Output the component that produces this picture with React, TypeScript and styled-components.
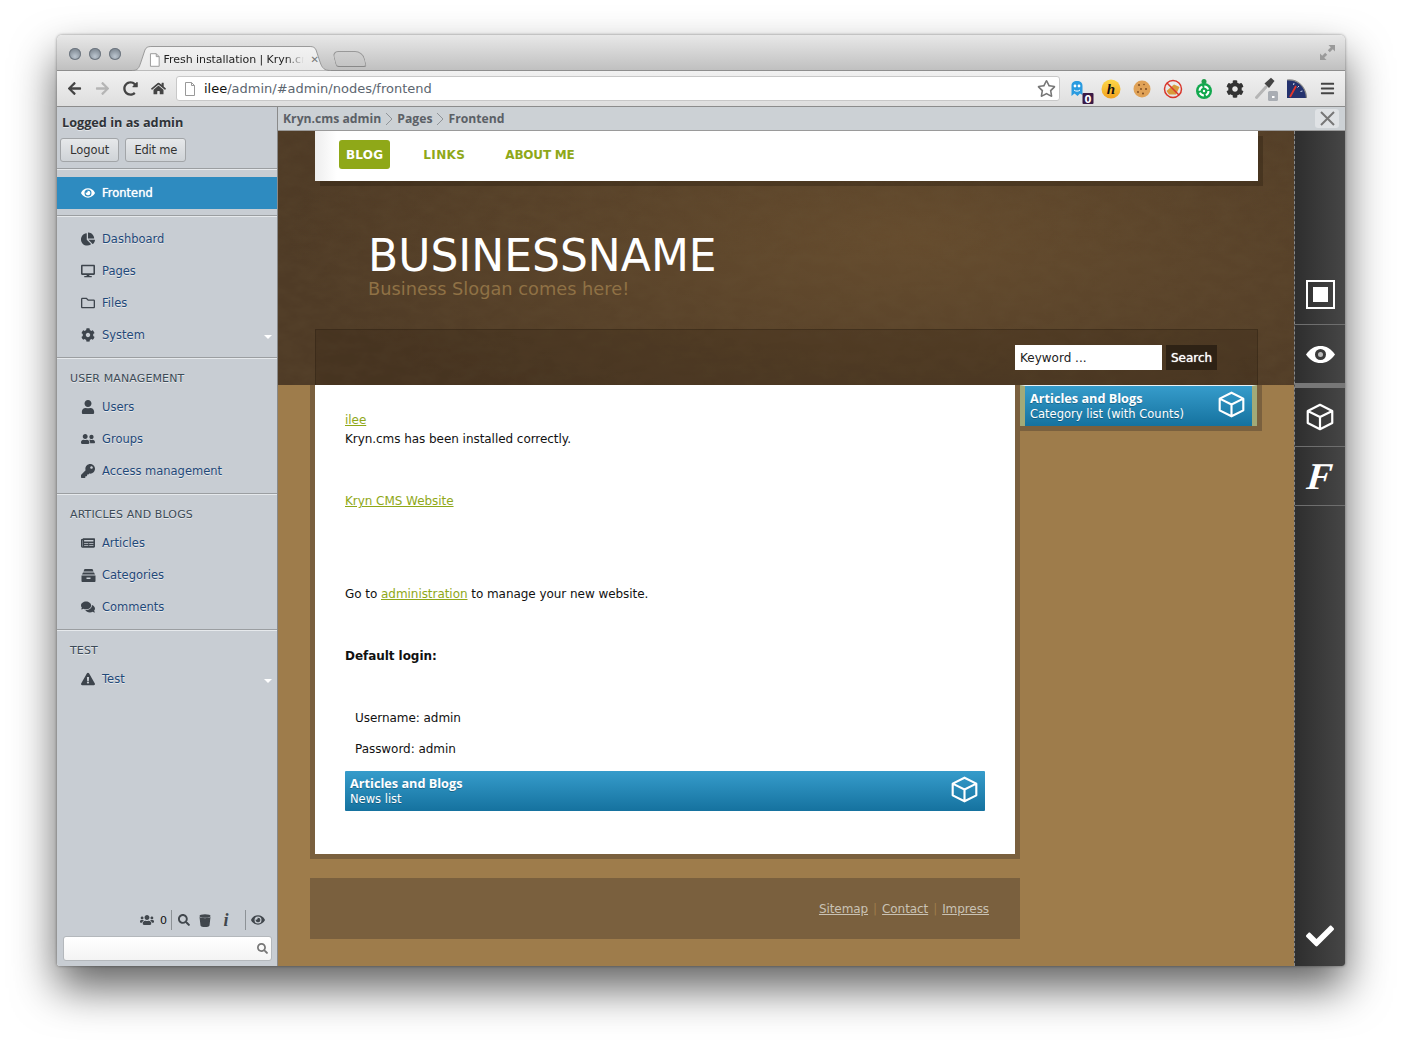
import React from "react";
import styled, { createGlobalStyle } from "styled-components";
import {
    FaChartPie, FaDesktop, FaRegFolder, FaCog, FaUser, FaUserFriends, FaKey,
    FaNewspaper, FaComments, FaExclamationTriangle, FaEye, FaSearch,
    FaUsers, FaCheck, FaArrowLeft, FaArrowRight, FaRedoAlt, FaHome,
    FaRegStar, FaBars,
} from "react-icons/fa";

const GlobalStyle = createGlobalStyle`
    html, body { margin: 0; padding: 0; background: #fff; }
    body { font-family: "DejaVu Sans", Verdana, sans-serif; font-size: 12px; }
    * { box-sizing: border-box; }
`;

const Cube = ({ size = 26 }: { size?: number }) => (
    <svg width={size} height={size} viewBox="0 0 24 24" fill="none" stroke="#fff" strokeWidth="1.9" strokeLinejoin="round">
        <path d="M12 1.5 L22.5 6.8 V17.2 L12 22.5 L1.5 17.2 V6.8 Z M1.5 6.8 L12 12 L22.5 6.8 M12 12 V22.5" />
    </svg>
);

const DocIcon = () => (
    <svg width="12" height="14" viewBox="0 0 12 14" fill="#fff" stroke="#999">
        <path d="M1.5 .5 H7.5 L10.5 3.5 V13.5 H1.5 Z M7.5 .5 V3.5 H10.5" />
    </svg>
);

const GhostIcon = () => (
    <svg width="30" height="30" viewBox="0 0 30 30">
        <path d="M6.500 22 V12 C6.500 8.500 8.500 7 12 7 C15.500 7 17.500 8.500 17.500 12 V21 L15 19.500 L12.500 22 L9.500 19.500 Z" fill="#2a9be0" />
        <circle cx="10" cy="12" r="1.400" fill="#fff" />
        <circle cx="14" cy="12" r="1.400" fill="#fff" />
        <path d="M9 16 C10.500 17.500 13.500 17.500 15 16" stroke="#fff" strokeWidth="1" fill="none" />
        <rect x="17.500" y="19" width="11" height="11" rx="1" fill="#3a1a45" />
        <text x="23" y="28.500" textAnchor="middle" fill="#fff" fontSize="10" fontWeight="bold" fontFamily="DejaVu Sans">0</text>
    </svg>
);

const HoneyIcon = () => (
    <svg width="20" height="20" viewBox="0 0 20 20">
        <defs>
            <linearGradient id="honey" x1="0" y1="0" x2="0" y2="1">
                <stop offset="0" stopColor="#fdd94a" />
                <stop offset="1" stopColor="#f2a21e" />
            </linearGradient>
        </defs>
        <circle cx="10" cy="10" r="9.500" fill="url(#honey)" />
        <text x="10" y="15" textAnchor="middle" fill="#111" fontSize="15" fontWeight="bold" fontStyle="italic" fontFamily="Liberation Serif">h</text>
    </svg>
);

const CookieIcon = () => (
    <svg width="18" height="18" viewBox="0 0 18 18">
        <circle cx="9" cy="9" r="8.500" fill="#e0a257" />
        <g fill="#7a4a20">
            <circle cx="6" cy="5" r="1" /><circle cx="11" cy="4.500" r=".8" /><circle cx="13" cy="9" r="1" />
            <circle cx="8" cy="9" r=".9" /><circle cx="5" cy="12" r=".9" /><circle cx="10" cy="13.500" r="1" />
        </g>
    </svg>
);

const NoFlashIcon = () => (
    <svg width="20" height="20" viewBox="0 0 20 20">
        <path d="M3.500 12 L11 5.500 L16.500 8 L13 15.500 L6 15.500 Z" fill="#d99a3a" />
        <circle cx="10" cy="10" r="8.500" fill="none" stroke="#d9362b" strokeWidth="1.500" />
        <path d="M4 4 L16 16" stroke="#d9362b" strokeWidth="1.500" />
    </svg>
);

const GreenIcon = () => (
    <svg width="18" height="22" viewBox="0 0 18 22">
        <circle cx="9" cy="3.500" r="2.500" fill="#1f9e4a" />
        <circle cx="9" cy="13" r="8" fill="#12a84e" />
        <circle cx="9" cy="13" r="4.500" fill="none" stroke="#fff" strokeWidth="2" strokeDasharray="5 2" />
        <circle cx="9" cy="13" r="1.200" fill="#fff" />
    </svg>
);

const DropperIcon = () => (
    <svg width="24" height="24" viewBox="0 0 24 24">
        <path d="M2.500 20.500 L12 10" stroke="#b5b5b5" strokeWidth="3" strokeLinecap="round" />
        <path d="M10.500 6.500 L17 0.800 L20.500 4 L15 11 Z" fill="#444" />
        <rect x="14" y="14" width="10" height="10" rx="1.500" fill="#a9adb3" />
        <rect x="18" y="19" width="2.500" height="2" fill="#fff" />
    </svg>
);

const GaugeIcon = () => (
    <svg width="20" height="20" viewBox="0 0 20 20">
        <path d="M0 19 V1 C10 0 19 7 19.500 19 Z" fill="#24326e" />
        <path d="M0 1 C10 0 19 7 19.500 19" stroke="#888" strokeWidth="1.200" fill="none" />
        <path d="M7 4 L6.500 6 M12 7 L10.500 8.500 M15.500 12 L13.500 12.500" stroke="#cfd6e8" strokeWidth="1" />
        <path d="M3 18 L9 7" stroke="#e5352b" strokeWidth="1.800" />
    </svg>
);

const ExpandIcon = () => (
    <svg width="15" height="15" viewBox="0 0 15 15" fill="#9a9a9a">
        <path d="M8.500 0 H15 V6.500 L12.800 4.300 L9.800 7.300 L7.800 5.300 L10.800 2.300 Z" />
        <path d="M6.500 15 H0 V8.500 L2.200 10.700 L5.200 7.700 L7.200 9.700 L4.200 12.700 Z" />
    </svg>
);

const StopIcon = () => (
    <svg width="29" height="29" viewBox="0 0 29 29">
        <rect x="1" y="1" width="27" height="27" fill="none" stroke="#fff" strokeWidth="2" />
        <rect x="7" y="7" width="15" height="15" fill="#fff" />
    </svg>
);

const BigEye = () => (
    <svg width="29" height="17" viewBox="0 0 29 17">
        <path d="M0 8.500 C4 2.500 9 0 14.500 0 C20 0 25 2.500 29 8.500 C25 14.500 20 17 14.500 17 C9 17 4 14.500 0 8.500 Z" fill="#fff" />
        <circle cx="14.500" cy="8.500" r="5.500" fill="#3a3a3a" />
        <circle cx="14.500" cy="8.500" r="2.500" fill="#bbb" />
    </svg>
);

const Chevron = () => (
    <svg width="16" height="14" viewBox="0 0 16 14" fill="none" stroke="#8f9397" strokeWidth="1">
        <path d="M5 1 L11 7 L5 13" />
    </svg>
);

const ThinClose = () => (
    <svg width="15" height="15" viewBox="0 0 15 15" stroke="#777" strokeWidth="2">
        <path d="M1 1 L14 14 M14 1 L1 14" />
    </svg>
);

const TrayIcon = () => (
    <svg width="15" height="13" viewBox="0 0 15 13" fill="currentColor">
        <path d="M3.500 0 H11.500 L12.500 2.500 H2.500 Z" />
        <path d="M2 3.500 H13 L14 5.500 H1 Z" />
        <path d="M.5 6.500 H14.500 V12 C14.500 12.600 14 13 13.500 13 H1.500 C1 13 .5 12.600 .5 12 Z M5.500 8.500 V10 H9.500 V8.500 Z" fillRule="evenodd" />
    </svg>
);

const BucketIcon = () => (
    <svg width="12" height="13" viewBox="0 0 12 13" fill="currentColor">
        <ellipse cx="6" cy="2" rx="5.500" ry="1.800" />
        <path d="M.5 3 C2 4.500 10 4.500 11.500 3 L10.500 11.500 C10 13.500 2 13.500 1.500 11.500 Z" />
    </svg>
);

const NoiseLayer = () => (
    <NoiseSvg aria-hidden="true">
        <filter id="leather">
            <feTurbulence type="fractalNoise" baseFrequency="0.05 0.09" numOctaves="4" seed="7" />
            <feColorMatrix values="0 0 0 0 0.16  0 0 0 0 0.11  0 0 0 0 0.05  0.9 0 0 0 -0.22" />
        </filter>
        <rect width="100%" height="100%" filter="url(#leather)" />
    </NoiseSvg>
);

interface MenuEntry {
    label: string;
    icon: React.ReactNode;
    more?: boolean;
}

interface MenuGroup {
    title?: string;
    items: MenuEntry[];
}

const groups: MenuGroup[] = [
    {
        items: [
            { label: "Dashboard", icon: <FaChartPie /> },
            { label: "Pages", icon: <FaDesktop /> },
            { label: "Files", icon: <FaRegFolder /> },
            { label: "System", icon: <FaCog />, more: true },
        ],
    },
    {
        title: "User management",
        items: [
            { label: "Users", icon: <FaUser /> },
            { label: "Groups", icon: <FaUserFriends /> },
            { label: "Access management", icon: <FaKey /> },
        ],
    },
    {
        title: "Articles and Blogs",
        items: [
            { label: "Articles", icon: <FaNewspaper /> },
            { label: "Categories", icon: <TrayIcon /> },
            { label: "Comments", icon: <FaComments /> },
        ],
    },
    {
        title: "Test",
        items: [{ label: "Test", icon: <FaExclamationTriangle />, more: true }],
    },
];

const App = () => {
    return (
        <Page>
            <GlobalStyle />
            <Win>
                <TabStrip>
                    <Lights><Light /><Light /><Light /></Lights>
                    <Tab>
                        <TabShape viewBox="0 0 200 25" preserveAspectRatio="none">
                            <path d="M0 24.500 C6 24.500 7 22 9 16 L13 4 C14 1.500 16 .5 19 .5 H179 C182 .5 184 1.500 185 4 L189 16 C191 22 193 24.500 200 24.500" fill="url(#tabfill)" stroke="#9a9a9a" />
                            <defs>
                                <linearGradient id="tabfill" x1="0" y1="0" x2="0" y2="1">
                                    <stop offset="0" stopColor="#f2f2f2" />
                                    <stop offset="1" stopColor="#e8e8e8" />
                                </linearGradient>
                            </defs>
                        </TabShape>
                        <TabInner>
                            <DocIcon />
                            <TabTitle>Fresh installation | Kryn.cr</TabTitle>
                            <TabClose>✕</TabClose>
                        </TabInner>
                    </Tab>
                    <NewTab />
                    <Expand><ExpandIcon /></Expand>
                </TabStrip>
                <Toolbar>
                    <NavButton><FaArrowLeft /></NavButton>
                    <NavButton $off><FaArrowRight /></NavButton>
                    <NavButton><FaRedoAlt /></NavButton>
                    <NavButton><FaHome /></NavButton>
                    <Address>
                        <DocIcon />
                        <AddressText><b>ilee</b>/admin/#admin/nodes/frontend</AddressText>
                        <Star><FaRegStar /></Star>
                    </Address>
                    <Extension><GhostIcon /></Extension>
                    <Extension><HoneyIcon /></Extension>
                    <Extension><CookieIcon /></Extension>
                    <Extension><NoFlashIcon /></Extension>
                    <Extension><GreenIcon /></Extension>
                    <Extension><FaCog size={18} color="#333" /></Extension>
                    <Extension><DropperIcon /></Extension>
                    <Extension><GaugeIcon /></Extension>
                    <Extension><FaBars size={15} color="#444" /></Extension>
                </Toolbar>
                <Main>
                    <Sidebar>
                        <UserBox>
                            <LoggedIn>Logged in as admin</LoggedIn>
                            <UserButtons>
                                <UserButton>Logout</UserButton>
                                <EditMeButton>Edit me</EditMeButton>
                            </UserButtons>
                        </UserBox>
                        <ActiveSection>
                            <ActiveRow><RowIcon><FaEye /></RowIcon>Frontend</ActiveRow>
                        </ActiveSection>
                        {groups.map((group, i) => (
                            <Section key={i} $last={i === groups.length - 1}>
                                {group.title && <SectionTitle>{group.title}</SectionTitle>}
                                {group.items.map((item) => (
                                    <Row key={item.label}>
                                        <RowIcon>{item.icon}</RowIcon>
                                        {item.label}
                                        {item.more && <MoreArrow />}
                                    </Row>
                                ))}
                            </Section>
                        ))}
                        <StatusBar>
                            <FaUsers size={14} />
                            <Count>0</Count>
                            <StatusSep $left={4} />
                            <StatusIcon><FaSearch size={12} /></StatusIcon>
                            <StatusIcon><BucketIcon /></StatusIcon>
                            <StatusIcon><InfoMark>i</InfoMark></StatusIcon>
                            <StatusSep $left={8} />
                            <StatusIcon><FaEye size={14} /></StatusIcon>
                        </StatusBar>
                        <SearchBox>
                            <FaSearch size={11} />
                        </SearchBox>
                    </Sidebar>
                    <Workspace>
                        <Breadcrumb>
                            Kryn.cms admin<Chevron />Pages<Chevron />Frontend
                            <CloseBox><ThinClose /></CloseBox>
                        </Breadcrumb>
                        <Stage>
                            <SitePage>
                                <SiteHeader>
                                    <NoiseLayer />
                                    <SiteNav>
                                        <NavLink $active $spacing={0.2}>BLOG</NavLink>
                                        <NavLink $spacing={0.4}>LINKS</NavLink>
                                        <NavLink $spacing={-0.2}>ABOUT ME</NavLink>
                                    </SiteNav>
                                    <Brand>
                                        <BrandName>BUSINESSNAME</BrandName>
                                        <Slogan>Business Slogan comes here!</Slogan>
                                    </Brand>
                                    <SearchBand>
                                        <KeywordInput>Keyword ...</KeywordInput>
                                        <SearchButton>Search</SearchButton>
                                    </SearchBand>
                                </SiteHeader>
                                <SiteBody>
                                    <ContentColumn>
                                        <ContentBox>
                                            <Para><TextLink>ilee</TextLink><br />Kryn.cms has been installed correctly.</Para>
                                            <Para>&nbsp;</Para>
                                            <Para><TextLink>Kryn CMS Website</TextLink></Para>
                                            <Para>&nbsp;</Para>
                                            <Para>&nbsp;</Para>
                                            <Para>Go to <TextLink>administration</TextLink> to manage your new website.</Para>
                                            <Para>&nbsp;</Para>
                                            <Para><b>Default login:</b></Para>
                                            <Para>&nbsp;</Para>
                                            <Para $indent>Username: admin</Para>
                                            <Para $indent>Password: admin</Para>
                                            <Widget>
                                                <WidgetText><b>Articles and Blogs</b><br />News list</WidgetText>
                                                <CubeSlot><Cube size={27} /></CubeSlot>
                                            </Widget>
                                        </ContentBox>
                                        <SiteFooter>
                                            <FooterLink>Sitemap</FooterLink><FooterSep>|</FooterSep>
                                            <FooterLink>Contact</FooterLink><FooterSep>|</FooterSep>
                                            <FooterLink>Impress</FooterLink>
                                        </SiteFooter>
                                    </ContentColumn>
                                    <SideColumn>
                                        <SideSlot>
                                            <SideWidget>
                                                <WidgetText><b>Articles and Blogs</b><br />Category list (with Counts)</WidgetText>
                                                <CubeSlot><Cube size={27} /></CubeSlot>
                                            </SideWidget>
                                        </SideSlot>
                                    </SideColumn>
                                </SiteBody>
                            </SitePage>
                            <EditBar>
                                <EditButton $height={194} $align="flex-end"><StopIcon /></EditButton>
                                <EditButton $height={63} $thick><BigEye /></EditButton>
                                <EditButton $height={59}><Cube size={28} /></EditButton>
                                <EditButton $height={59}><FancyF>F</FancyF></EditButton>
                                <CheckButton><FaCheck size={28} /></CheckButton>
                            </EditBar>
                        </Stage>
                    </Workspace>
                </Main>
            </Win>
        </Page>
    );
};

const Page = styled.div`
    width: 1402px;
    height: 1045px;
    padding: 35px 57px 0;
    overflow: hidden;
`;

const Win = styled.div`
    width: 1288px;
    height: 931px;
    display: flex;
    flex-direction: column;
    border-radius: 5px 5px 3px 3px;
    box-shadow: 0 22px 44px rgba(0, 0, 0, 0.62), 0 0 3px rgba(0, 0, 0, 0.45);
    overflow: hidden;
`;

const TabStrip = styled.div`
    height: 36px;
    flex: none;
    display: flex;
    align-items: flex-end;
    background: linear-gradient(#e8e8e8, #c0c0c0);
    border-bottom: 1px solid #8e8e8e;
`;

const Lights = styled.div`
    display: flex;
    gap: 8px;
    margin: 0 10px 10px 12px;
`;

const Light = styled.span`
    width: 12px;
    height: 12px;
    border-radius: 50%;
    background: radial-gradient(circle at 50% 70%, #bcc6d0, #68727c);
    box-shadow: inset 0 0 0 1px #6f7780;
`;

const Tab = styled.div`
    position: relative;
    width: 199px;
    height: 25px;
    margin-bottom: -1px;
    margin-left: 1px;
`;

const TabShape = styled.svg`
    position: absolute;
    inset: 0;
    width: 100%;
    height: 100%;
`;

const TabInner = styled.div`
    position: relative;
    height: 100%;
    display: flex;
    align-items: center;
    padding: 2px 12px 0 17px;
    gap: 3px;
`;

const TabTitle = styled.span`
    width: 144px;
    flex: none;
    white-space: nowrap;
    font-size: 11px;
    letter-spacing: -0.06px;
    color: #222;
    -webkit-mask-image: linear-gradient(90deg, #000 122px, transparent 140px);
    mask-image: linear-gradient(90deg, #000 122px, transparent 140px);
`;

const TabClose = styled.span`
    font-size: 10px;
    color: #777;
`;

const NewTab = styled.div`
    width: 31px;
    height: 16px;
    margin: 0 0 3px 3px;
    border: 1px solid #999;
    border-bottom-color: #888;
    border-radius: 6px 8px 3px 3px;
    transform: skewX(14deg);
    background: linear-gradient(#d0d0d0, #c4c4c4);
`;

const Expand = styled.div`
    margin-left: auto;
    margin-right: 10px;
    margin-bottom: 10px;
    display: flex;
`;

const Toolbar = styled.div`
    height: 36px;
    flex: none;
    display: flex;
    align-items: center;
    padding-left: 3px;
    background: linear-gradient(#f1f1f1, #dedede);
    border-bottom: 1px solid #8c8c8c;
`;

const NavButton = styled.div<{ $off?: boolean }>`
    width: 28px;
    display: flex;
    justify-content: center;
    font-size: 15px;
    color: ${({ $off }) => ($off ? "#b5b5b5" : "#444")};
`;

const Address = styled.div`
    width: 884px;
    height: 25px;
    margin: 0 4px;
    padding: 0 3px 0 7px;
    display: flex;
    align-items: center;
    gap: 8px;
    background: #fff;
    border: 1px solid #c8c8c8;
    border-radius: 3px;
`;

const AddressText = styled.span`
    font-size: 13px;
    color: #5c6670;
    b { font-weight: normal; color: #111; }
`;

const Star = styled.span`
    margin-left: auto;
    display: flex;
    font-size: 19px;
    color: #777;
`;

const Extension = styled.div`
    width: 31px;
    height: 26px;
    display: flex;
    align-items: center;
    justify-content: center;
`;

const Main = styled.div`
    flex: 1;
    min-height: 0;
    display: flex;
`;

const Sidebar = styled.aside`
    width: 221px;
    flex: none;
    display: flex;
    flex-direction: column;
    background: #c8cdd3;
    border-right: 1px solid #8a8a8a;
`;

const UserBox = styled.div`
    height: 62px;
    padding: 8px 3px 0;
    border-bottom: 1px solid #9b9ea1;
`;

const LoggedIn = styled.div`
    padding-left: 2px;
    height: 15px;
    line-height: 15px;
    font-family: "Open Sans", sans-serif;
    font-size: 12.7px;
    font-weight: bold;
    color: #2f3338;
    text-shadow: 0 1px 0 rgba(255, 255, 255, 0.5);
`;

const UserButtons = styled.div`
    display: flex;
    gap: 6px;
    margin-top: 8px;
`;

const UserButton = styled.div`
    height: 24px;
    line-height: 22px;
    padding: 0 9px;
    font-size: 11.5px;
    color: #333;
    background: linear-gradient(#e6e8ea, #cfd3d7);
    border: 1px solid #a2a5a8;
    border-radius: 3px;
`;

const EditMeButton = styled(UserButton)`
    padding: 0 8px;
    letter-spacing: -0.2px;
`;

const ActiveSection = styled.div`
    height: 47px;
    padding-top: 7px;
    border-top: 1px solid #e6e9ec;
    border-bottom: 1px solid #9b9ea1;
`;

const ActiveRow = styled.div`
    height: 32px;
    display: flex;
    align-items: center;
    padding-left: 23px;
    font-size: 11.5px;
    font-weight: 500;
    color: #fff;
    background: #2e8bc0;
    text-shadow: 0 0 1px #fff;
`;

const Section = styled.div<{ $last?: boolean }>`
    padding: 6px 0 6px;
    border-top: 1px solid #e6e9ec;
    border-bottom: ${({ $last }) => ($last ? "none" : "1px solid #9b9ea1")};
`;

const SectionTitle = styled.div`
    height: 26px;
    padding: 7px 0 0 13px;
    font-size: 11px;
    line-height: 14px;
    letter-spacing: 0.12px;
    text-transform: uppercase;
    color: #3c4a56;
    text-shadow: 0 1px 0 rgba(255, 255, 255, 0.6);
`;

const Row = styled.div`
    height: 32px;
    display: flex;
    align-items: center;
    padding-left: 23px;
    font-size: 11.5px;
    color: #1f4878;
    text-shadow: 0 1px 0 rgba(255, 255, 255, 0.6);
`;

const RowIcon = styled.span`
    width: 16px;
    margin-right: 6px;
    display: flex;
    justify-content: center;
    font-size: 14px;
    color: #3d444c;
    ${ActiveRow} & { color: #fff; }
`;

const MoreArrow = styled.span`
    margin: 4px 5px 0 auto;
    width: 0;
    height: 0;
    border-left: 4px solid transparent;
    border-right: 4px solid transparent;
    border-top: 4px solid #fff;
`;

const StatusBar = styled.div`
    margin-top: auto;
    height: 20px;
    display: flex;
    align-items: center;
    padding-left: 83px;
    color: #41474d;
`;

const Count = styled.span`
    margin-left: 6px;
    font-size: 11px;
    color: #111;
`;

const StatusSep = styled.span<{ $left: number }>`
    width: 1px;
    height: 20px;
    margin: 0 2px 0 ${({ $left }) => $left}px;
    background: #8d9296;
`;

const StatusIcon = styled.span`
    width: 20px;
    display: flex;
    justify-content: center;
    margin-right: 1px;
`;

const InfoMark = styled.span`
    font-family: "Liberation Serif", serif;
    font-size: 18px;
    line-height: 18px;
    font-weight: bold;
    font-style: italic;
`;

const SearchBox = styled.div`
    height: 25px;
    margin: 6px 5px 5px 6px;
    padding-right: 3px;
    display: flex;
    align-items: center;
    justify-content: flex-end;
    color: #777;
    background: linear-gradient(#fff, #f4f4f4);
    border: 1px solid #b4b8bc;
    border-radius: 3px;
`;

const Workspace = styled.div`
    flex: 1;
    min-width: 0;
    display: flex;
    flex-direction: column;
`;

const Breadcrumb = styled.div`
    height: 24px;
    flex: none;
    position: relative;
    display: flex;
    align-items: center;
    padding-left: 5px;
    font-family: "Open Sans", sans-serif;
    font-size: 12.2px;
    font-weight: bold;
    color: #5b6066;
    background: #ccd1d5;
    border-bottom: 1px solid #9a9a9a;
`;

const CloseBox = styled.span`
    position: absolute;
    right: 6px;
    top: 2px;
    width: 24px;
    height: 19px;
    display: flex;
    align-items: center;
    justify-content: center;
    background: #dfe2e5;
    border-radius: 3px;
`;

const Stage = styled.div`
    flex: 1;
    min-height: 0;
    display: flex;
`;

const SitePage = styled.div`
    flex: 1;
    min-width: 0;
    display: flex;
    flex-direction: column;
    background: #9e7c4b;
`;

const SiteHeader = styled.header`
    position: relative;
    height: 254px;
    flex: none;
    display: flex;
    flex-direction: column;
    padding: 0 36px 0 37px;
    background:
        radial-gradient(ellipse 620px 210px at 62% 42%, rgba(112, 84, 50, 0.7), rgba(112, 84, 50, 0) 100%),
        #4f3b26;
`;

const NoiseSvg = styled.svg`
    position: absolute;
    inset: 0;
    width: 100%;
    height: 100%;
    opacity: 0.25;
`;

const SiteNav = styled.nav`
    position: relative;
    height: 50px;
    flex: none;
    display: flex;
    align-items: center;
    padding: 0 0 4px 24px;
    gap: 40px;
    background: linear-gradient(90deg, #eee, #fff 22px);
    box-shadow: 5px 5px 0 rgba(40, 28, 14, 0.35);
`;

const NavLink = styled.a<{ $active?: boolean; $spacing?: number }>`
    height: 29px;
    line-height: 30px;
    padding: 0 ${({ $active }) => ($active ? 7 : 0)}px;
    margin-right: ${({ $active }) => ($active ? -7 : 0)}px;
    font-size: 12px;
    font-weight: bold;
    letter-spacing: ${({ $spacing }) => $spacing || 0}px;
    border-radius: 3px;
    color: ${({ $active }) => ($active ? "#fff" : "#8fa818")};
    background: ${({ $active }) => ($active ? "#8fa818" : "transparent")};
`;

const Brand = styled.div`
    position: relative;
    padding: 49px 0 0 53px;
`;

const BrandName = styled.h1`
    margin: 0;
    font-size: 44px;
    line-height: 52px;
    font-weight: normal;
    color: #fff;
`;

const Slogan = styled.div`
    margin-top: -3px;
    font-size: 17.8px;
    line-height: 20px;
    color: #8f7145;
`;

const SearchBand = styled.div`
    position: relative;
    margin-top: auto;
    height: 56px;
    display: flex;
    justify-content: flex-end;
    gap: 4px;
    padding: 15px 40px 0 0;
    background: rgba(40, 28, 14, 0.22);
    border: 1px solid rgba(40, 28, 14, 0.35);
    border-bottom: none;
`;

const KeywordInput = styled.div`
    width: 147px;
    height: 25px;
    line-height: 27px;
    padding-left: 5px;
    font-size: 12px;
    color: #222;
    background: #fff;
`;

const SearchButton = styled.div`
    width: 51px;
    height: 25px;
    line-height: 27px;
    text-align: center;
    font-size: 12px;
    color: #fff;
    background: #2e2215;
    text-shadow: 0 0 1px #fff;
`;

const SiteBody = styled.div`
    flex: 1;
    min-height: 0;
    display: flex;
    align-items: flex-start;
    padding-left: 32px;
`;

const ContentColumn = styled.div`
    width: 710px;
    flex: none;
`;

const ContentBox = styled.div`
    height: 474px;
    padding: 26px 30px 0;
    background: #fff;
    border: 5px solid #7a603e;
    border-top: none;
    color: #111;
    line-height: 19px;
    letter-spacing: -0.05px;
`;

const Para = styled.p<{ $indent?: boolean }>`
    margin: 12px 0;
    padding-left: ${({ $indent }) => ($indent ? 10 : 0)}px;
    &:first-child { margin-top: 0; }
`;

const TextLink = styled.a`
    color: #8fa818;
    text-decoration: underline;
`;

const Widget = styled.div`
    width: 640px;
    height: 40px;
    display: flex;
    align-items: center;
    justify-content: space-between;
    padding: 1px 7px 0 5px;
    color: #fff;
    background: linear-gradient(#369ccb, #15729f);
    border-radius: 1px;
    letter-spacing: 0;
`;

const WidgetText = styled.div`
    font-size: 11.5px;
    line-height: 15px;
    text-shadow: 0 1px 0 rgba(0, 0, 0, 0.25);
    b {
        font-family: "Open Sans", sans-serif;
        font-size: 12.7px;
    }
`;

const CubeSlot = styled.span`
    display: flex;
    margin-top: -4px;
`;

const SiteFooter = styled.footer`
    margin-top: 19px;
    height: 61px;
    display: flex;
    align-items: center;
    justify-content: flex-end;
    gap: 5px;
    padding-right: 31px;
    letter-spacing: -0.08px;
    background: #7a603e;
`;

const FooterLink = styled.a`
    color: #c9c2b4;
    text-decoration: underline;
`;

const FooterSep = styled.span`
    color: #9e7c4b;
`;

const SideColumn = styled.div`
    width: 242px;
    flex: none;
`;

const SideSlot = styled.div`
    height: 46px;
    padding: 0 5px 5px 0;
    background: #7a603e;
`;

const SideWidget = styled(Widget)`
    width: 100%;
    height: 41px;
    padding: 1px 7px 0 5px;
    border-left: 5px solid #a2aa78;
    border-right: 5px solid #a2aa78;
    background-clip: padding-box;
    border-radius: 0;
    border-top: 1px solid #e8f2f6;
`;

const EditBar = styled.div`
    width: 51px;
    flex: none;
    display: flex;
    flex-direction: column;
    color: #fff;
    background: linear-gradient(90deg, #2e2e2e, #464646);
    border-left: 1px dashed #8a8a8a;
`;

const EditButton = styled.div<{ $height: number; $align?: string; $thick?: boolean }>`
    height: ${({ $height }) => $height}px;
    flex: none;
    display: flex;
    justify-content: center;
    align-items: ${({ $align }) => $align || "center"};
    padding-bottom: ${({ $align }) => ($align ? 15 : 0)}px;
    border-bottom: ${({ $thick }) => ($thick ? "5px solid #777" : "1px solid #6e6e6e")};
`;

const FancyF = styled.span`
    font-family: "Liberation Serif", serif;
    font-size: 38px;
    line-height: 38px;
    font-style: italic;
    font-weight: bold;
    transform: skewX(-6deg);
`;

const CheckButton = styled.div`
    margin-top: auto;
    height: 60px;
    display: flex;
    justify-content: center;
    align-items: center;
`;

export default App;
